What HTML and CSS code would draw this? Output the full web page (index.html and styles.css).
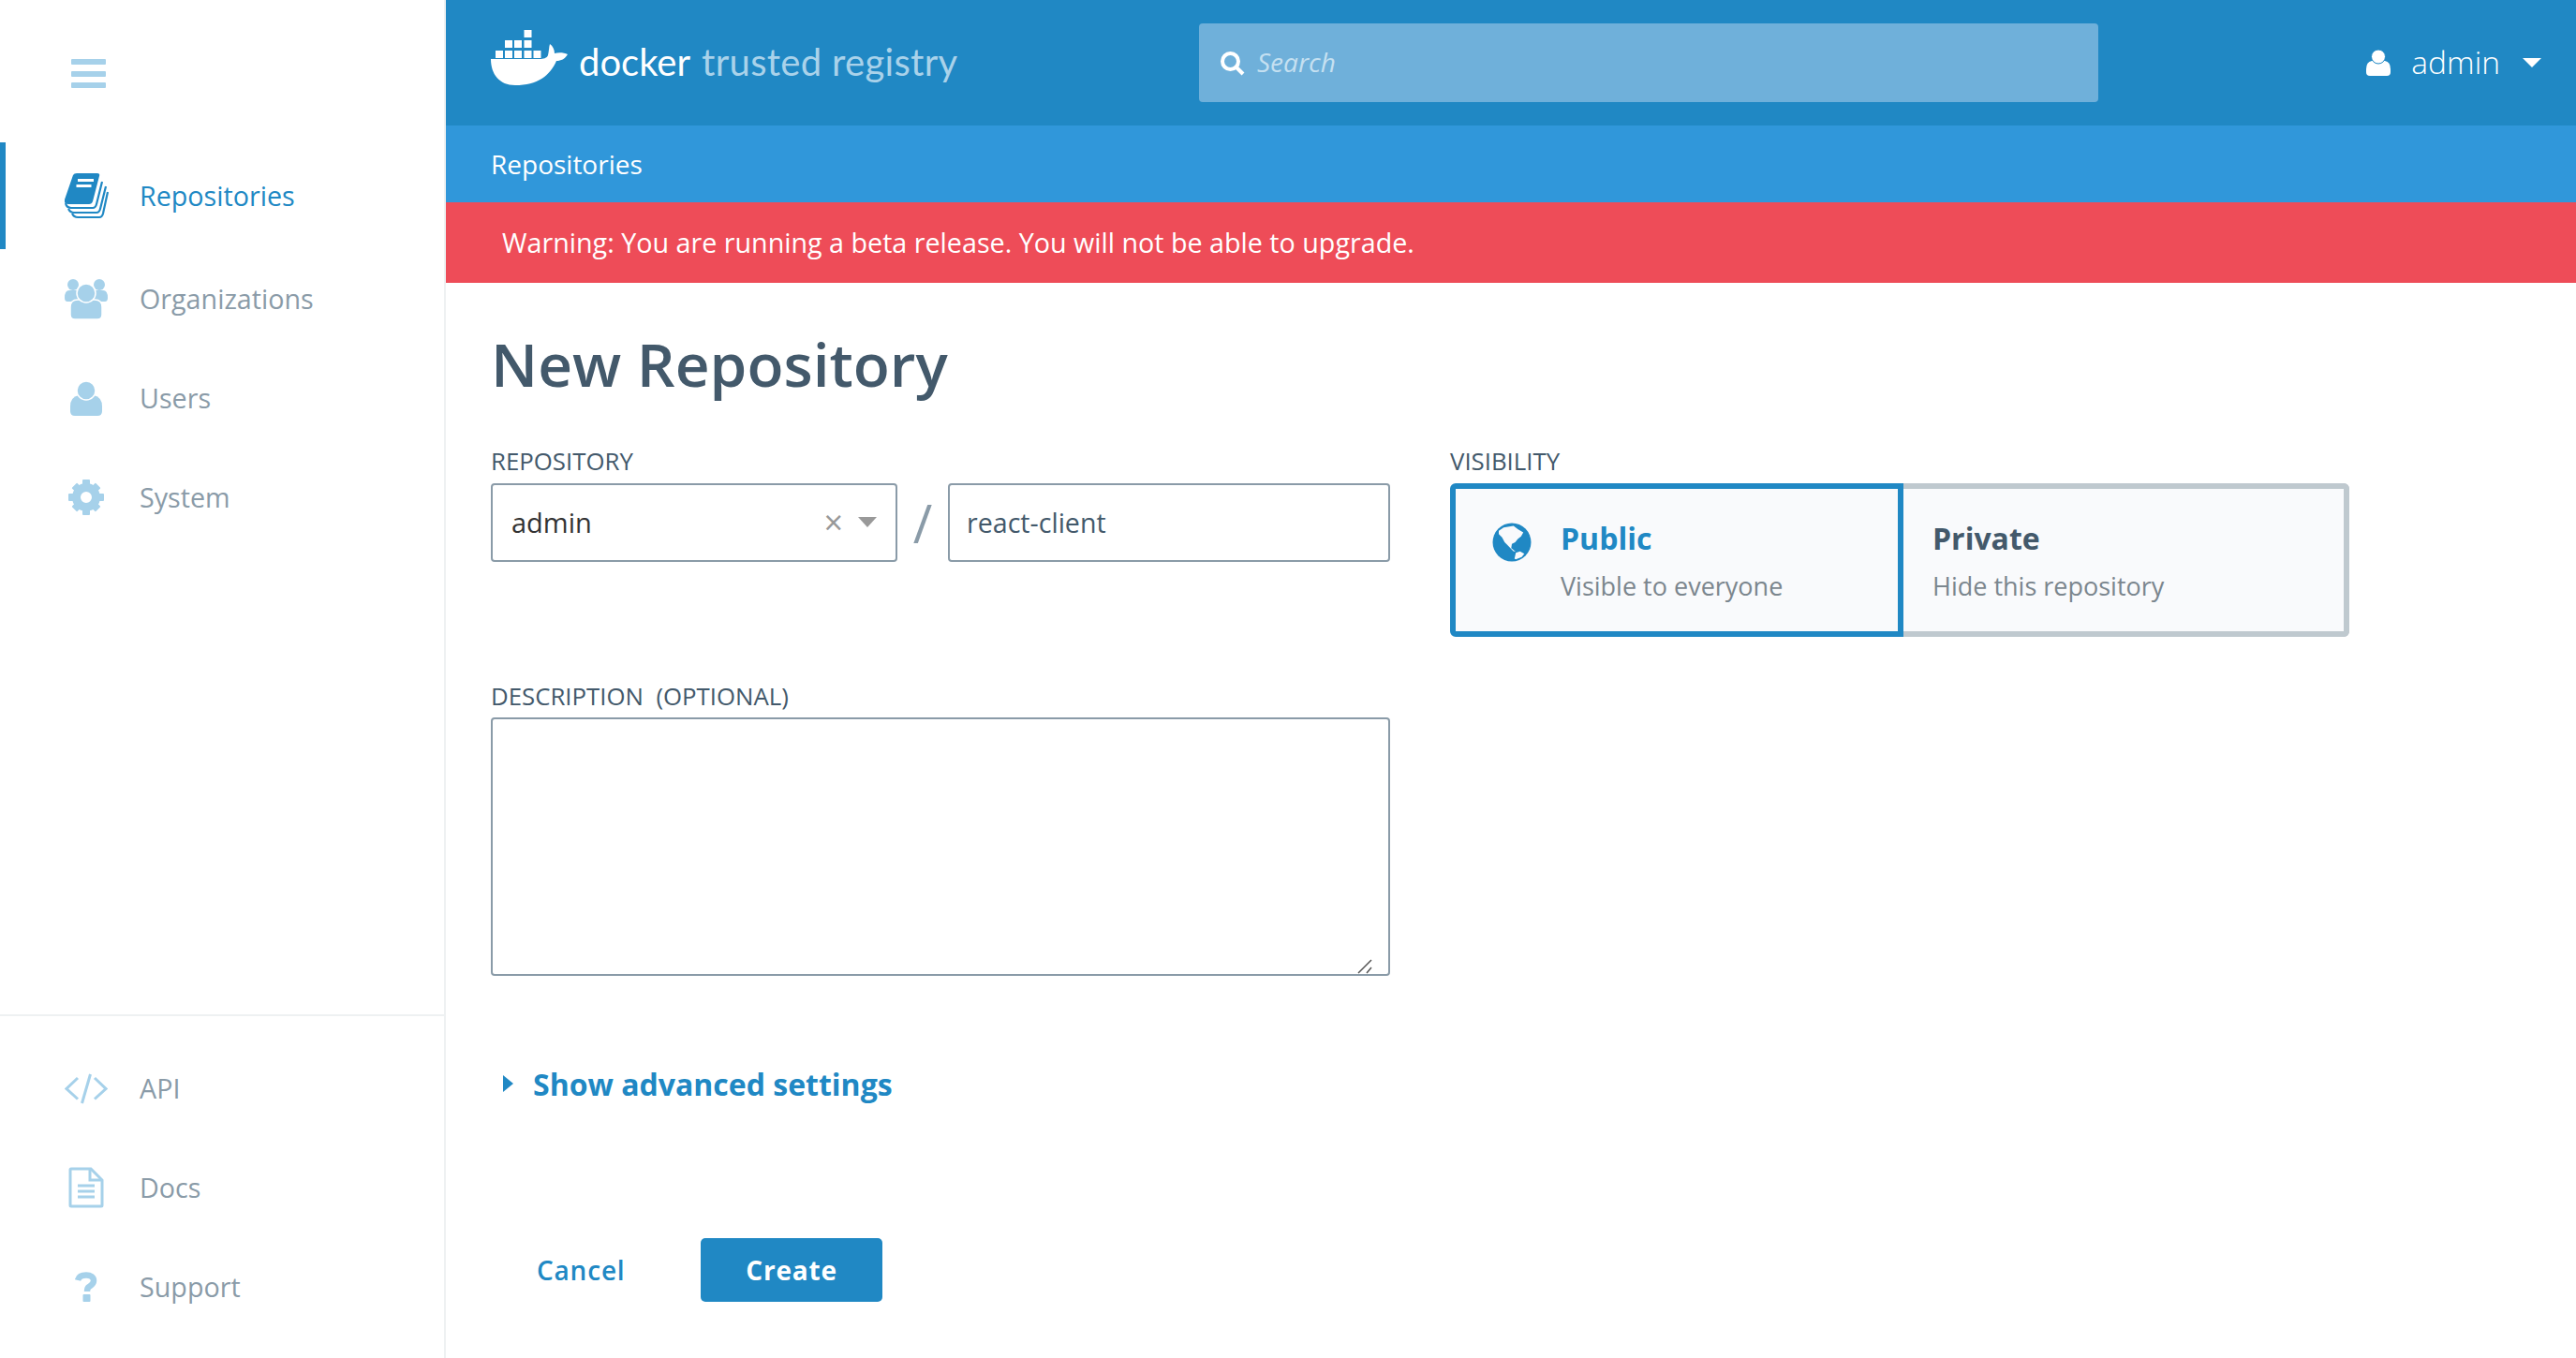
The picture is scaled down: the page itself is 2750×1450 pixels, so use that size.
FILE: index.html
```html
<!DOCTYPE html>
<html>
<head>
    <meta charset="UTF-8">
    <title>New Repository</title>
    <link rel="stylesheet" href="styles.css">
</head>
<body>
    <aside class="sidebar">
        <div class="burger-area">
            <div class="burger"><span></span><span></span><span></span></div>
        </div>
        <nav class="nav-top">
            <a class="nav-item active">
                <span class="nav-icon">
                    <svg width="47" height="49" viewBox="0 0 47 49">
                        <path class="book-cover" d="M9 2Q10 0 13 0H35Q38 0 37 3L30 30Q29 33 26 33H4Q-1 33 0 28Z"/>
                        <rect class="book-label" x="14" y="6" width="17" height="3"/>
                        <rect class="book-label" x="12.500" y="12" width="16" height="3"/>
                        <path class="book-page" d="M1 32Q2 37 7 37H30Q33 37 34 33L40 9"/>
                        <path class="book-page" d="M4 38Q6 42 10 42H34Q37 42 38 38L44 14"/>
                        <path class="book-page" d="M8 43Q10 47 14 47H37Q40 47 41 43L46 20"/>
                    </svg>
                </span>
                Repositories
            </a>
            <a class="nav-item">
                <span class="nav-icon">
                    <svg width="46" height="43" viewBox="0 0 46 43">
                        <circle class="fill-icon" cx="9" cy="6" r="6"/>
                        <circle class="fill-icon" cx="37" cy="6" r="6"/>
                        <path class="fill-icon" d="M0 20Q0 12 5 12H13Q20 12 20 20V24H3Q0 24 0 20Z"/>
                        <path class="fill-icon" d="M46 20Q46 12 41 12H33Q26 12 26 20V24H43Q46 24 46 20Z"/>
                        <path class="fill-icon cut" d="M6 30Q6 22 14 22H32Q40 22 40 30V38Q40 43 35 43H11Q6 43 6 38Z"/>
                        <circle class="fill-icon cut" cx="23" cy="15" r="10"/>
                    </svg>
                </span>
                Organizations
            </a>
            <a class="nav-item">
                <span class="nav-icon">
                    <svg width="34" height="37" viewBox="0 0 34 37">
                        <path class="fill-icon" d="M0 27Q0 17 9 15H25Q34 17 34 27V32Q34 37 29 37H5Q0 37 0 32Z"/>
                        <circle class="fill-icon cut" cx="17" cy="10" r="10"/>
                    </svg>
                </span>
                Users
            </a>
            <a class="nav-item">
                <span class="nav-icon">
                    <svg width="38" height="38" viewBox="0 0 38 38">
                        <circle class="gear-ring" cx="19" cy="19" r="10.500"/>
                        <g class="fill-icon">
                            <rect x="15" y="0" width="8" height="9" rx="1"/>
                            <rect x="15" y="29" width="8" height="9" rx="1"/>
                            <rect x="0" y="15" width="9" height="8" rx="1"/>
                            <rect x="29" y="15" width="9" height="8" rx="1"/>
                            <rect x="15" y="1" width="8" height="9" rx="1" transform="rotate(45 19 19)"/>
                            <rect x="15" y="28" width="8" height="9" rx="1" transform="rotate(45 19 19)"/>
                            <rect x="1" y="15" width="9" height="8" rx="1" transform="rotate(45 19 19)"/>
                            <rect x="28" y="15" width="9" height="8" rx="1" transform="rotate(45 19 19)"/>
                        </g>
                    </svg>
                </span>
                System
            </a>
        </nav>
        <nav class="nav-bottom">
            <a class="nav-item">
                <span class="nav-icon">
                    <svg width="46" height="33" viewBox="0 0 46 33">
                        <path class="line-icon" d="M14 5L2 16.500L14 27.500"/>
                        <path class="line-icon" d="M27.500 1L18.500 32"/>
                        <path class="line-icon" d="M32 5L44 16.500L32 27.500"/>
                    </svg>
                </span>
                API
            </a>
            <a class="nav-item">
                <span class="nav-icon">
                    <svg width="38" height="44" viewBox="0 0 38 44">
                        <path class="line-icon" d="M2 3Q2 2 3 2H24L36 14V41Q36 42 35 42H3Q2 42 2 41Z"/>
                        <path class="line-icon" d="M23 2V14H36"/>
                        <path class="line-icon" d="M10 20H28M10 26H28M10 32H28"/>
                    </svg>
                </span>
                Docs
            </a>
            <a class="nav-item">
                <span class="nav-icon">
                    <svg width="24" height="32" viewBox="0 0 24 32">
                        <path class="help-mark" d="M3 9C4 5 7 3.500 12 3.500C17 3.500 20 6 20 9.500C20 13 17 14.500 15 16C13.500 17 13 18.500 13 21"/>
                        <rect class="fill-icon" x="8.500" y="24" width="8" height="8" rx="1"/>
                    </svg>
                </span>
                Support
            </a>
        </nav>
    </aside>

    <div class="content">
        <header class="topbar">
            <div class="logo">
                <svg class="whale" width="82" height="59" viewBox="0 0 82 59">
                    <rect x="35.500" y="0" width="8" height="8"/>
                    <rect x="15" y="11" width="8" height="8"/>
                    <rect x="25" y="11" width="8" height="8"/>
                    <rect x="35.500" y="11" width="8" height="8"/>
                    <rect x="5" y="22" width="8" height="8"/>
                    <rect x="15" y="22" width="8" height="8"/>
                    <rect x="25" y="22" width="8" height="8"/>
                    <rect x="35.500" y="22" width="8" height="8"/>
                    <rect x="45.500" y="22" width="8" height="8"/>
                    <path d="M0 31H52C56 31 60 30 61 27C62 23 62 18 63 15C66 17 68 21 68 25C72 24 78 24 82 26C79 31 75 33 70 33C63 49 50 59 26 59C9 59 0 47 0 31Z"/>
                </svg>
                <span class="logo-docker">docker</span>
                <span class="logo-product">trusted registry</span>
            </div>
            <div class="search">
                <svg width="28" height="28" viewBox="0 0 28 28">
                    <circle class="search-glass" cx="11.500" cy="11.500" r="8.500"/>
                    <path class="search-glass" d="M18 18L25 25"/>
                </svg>
                <span class="search-text">Search</span>
            </div>
            <div class="user-menu">
                <svg width="26" height="28" viewBox="0 0 26 28">
                    <path class="user-body" d="M0 21Q0 13 6 12H20Q26 13 26 21V24Q26 28 22 28H4Q0 28 0 24Z"/>
                    <circle class="user-head" cx="13" cy="7.500" r="7.500"/>
                </svg>
                <span class="user-name">admin</span>
                <span class="user-caret"></span>
            </div>
        </header>
        <div class="subbar">Repositories</div>
        <div class="warning">Warning: You are running a beta release. You will not be able to upgrade.</div>

        <main class="page">
            <h1>New Repository</h1>
            <div class="form-grid">
                <div class="col-left">
                    <label class="field-label">REPOSITORY</label>
                    <div class="repo-row">
                        <div class="select-box">
                            <span class="select-value">admin</span>
                            <span class="select-clear">×</span>
                            <span class="select-caret"></span>
                        </div>
                        <span class="slash">/</span>
                        <input class="text-input" type="text" value="react-client">
                    </div>
                    <label class="field-label desc-label">DESCRIPTION&nbsp; (OPTIONAL)</label>
                    <div class="desc-wrap">
                        <textarea class="desc-input"></textarea>
                        <svg class="grip" width="16" height="16" viewBox="0 0 16 16">
                            <path d="M1 15L15 1M10 15L15 9"/>
                        </svg>
                    </div>
                </div>
                <div class="col-right">
                    <label class="field-label">VISIBILITY</label>
                    <div class="visibility">
                        <div class="vis-card selected">
                            <svg class="globe" width="42" height="42" viewBox="0 0 42 42">
                                <circle cx="21" cy="21" r="20.500" fill="#2088c4"/>
                                <path fill="#f9fafc" d="M7 8.800L12.200 5.200L22.800 3.500L27.300 7L33.200 10.500L30.800 14.700L27.300 17.500L24.500 21L21 22.800L20.300 27.300L25 31L22.500 30.500L16.800 24.500L13.300 21L10.500 15.800L7 12.200Z"/>
                                <path fill="#f9fafc" d="M23.800 38.500L25.200 32.200L29.700 30.800L34.300 33.200L31.500 36.800L25.200 39.200Z"/>
                            </svg>
                            <div class="vis-title">Public</div>
                            <div class="vis-sub">Visible to everyone</div>
                        </div>
                        <div class="vis-card">
                            <div class="vis-title">Private</div>
                            <div class="vis-sub">Hide this repository</div>
                        </div>
                    </div>
                </div>
            </div>
            <a class="advanced"><span class="advanced-arrow"></span>Show advanced settings</a>
            <div class="actions">
                <a class="btn-cancel">Cancel</a>
                <button class="btn-create" type="button">Create</button>
            </div>
        </main>
    </div>
</body>
</html>
```

FILE: styles.css
```css
* {
    box-sizing: border-box;
}

body {
    margin: 0;
    height: 1450px;
    display: flex;
    overflow: hidden;
    background-color: #ffffff;
    font-family: "Open Sans", Arial, sans-serif;
    color: #43596b;
}

/* sidebar */
.sidebar {
    width: 476px;
    height: 1450px;
    flex-shrink: 0;
    display: flex;
    flex-direction: column;
    border-right: 2px solid #eef1f2;
}

.burger-area {
    height: 152px;
    padding: 63px 0 0 76px;
}

.burger {
    width: 37px;
    height: 31px;
    display: flex;
    flex-direction: column;
    justify-content: space-between;
}

.burger span {
    height: 6px;
    border-radius: 1px;
    background-color: #a6d1ea;
}

.nav-top {
    flex: 1;
}

.nav-item {
    display: flex;
    align-items: center;
    height: 106px;
    padding-bottom: 2px;
    font-size: 28.700px;
    color: #8a9ba8;
}

.nav-item.active {
    height: 114px;
    color: #2088c4;
    border-left: 6px solid #2088c4;
}

.nav-icon {
    width: 50px;
    margin-left: 67px;
    margin-right: 32px;
    margin-top: 2px;
    display: flex;
    justify-content: center;
    flex-shrink: 0;
}

.nav-icon svg {
    flex-shrink: 0;
}

.active .nav-icon {
    margin-left: 61px;
}

.nav-bottom {
    border-top: 2px solid #eef1f2;
    padding: 24px 0 23px;
}

.fill-icon {
    fill: #a6d1ea;
}

.cut {
    stroke: #ffffff;
    stroke-width: 1.500;
}

.gear-ring {
    fill: none;
    stroke: #a6d1ea;
    stroke-width: 9;
}

.line-icon {
    fill: none;
    stroke: #a6d1ea;
    stroke-width: 3;
}

.help-mark {
    fill: none;
    stroke: #a6d1ea;
    stroke-width: 6.500;
}

.book-cover {
    fill: #2088c4;
}

.book-label {
    fill: #ffffff;
}

.book-page {
    fill: none;
    stroke: #2088c4;
    stroke-width: 2.200;
}

/* top bars */
.content {
    flex: 1;
    min-width: 0;
}

.topbar {
    height: 134px;
    padding-left: 48px;
    padding-right: 37px;
    display: flex;
    align-items: center;
    background-color: #2088c4;
    color: #ffffff;
}

.logo {
    width: 756px;
    display: flex;
    align-items: center;
    font-family: Lato, sans-serif;
    font-size: 40px;
    line-height: 1;
    flex-shrink: 0;
}

.whale {
    fill: #ffffff;
    margin-right: 12px;
    margin-bottom: 11px;
    flex-shrink: 0;
}

.logo-docker {
    margin-right: 12px;
    margin-bottom: 3px;
}

.logo-product {
    margin-bottom: 3px;
    letter-spacing: 0.300px;
    color: #a9d2ea;
}

.search {
    width: 960px;
    height: 84px;
    display: flex;
    align-items: center;
    padding-left: 22px;
    background-color: #6fb0da;
    border-radius: 4px;
}

.search svg {
    margin-top: 2px;
}

.search-text {
    margin-left: 12px;
    margin-bottom: 2px;
    font-size: 28px;
    font-style: italic;
    color: #c5e0f1;
}

.search-glass {
    fill: none;
    stroke: #ffffff;
    stroke-width: 4;
}

.user-menu {
    margin-left: auto;
    display: flex;
    align-items: center;
}

.user-body {
    fill: #ffffff;
}

.user-head {
    fill: #ffffff;
    stroke: #2088c4;
    stroke-width: 1;
}

.user-name {
    margin-left: 22px;
    margin-bottom: 2px;
    font-size: 33.500px;
    font-weight: 300;
}

.user-caret {
    margin-left: 24px;
    border-left: 10px solid transparent;
    border-right: 10px solid transparent;
    border-top: 10px solid #ffffff;
}

.subbar {
    height: 82px;
    padding-left: 48px;
    display: flex;
    align-items: center;
    background-color: #3097da;
    color: #ffffff;
    font-size: 28px;
}

.warning {
    height: 86px;
    padding-left: 60px;
    padding-bottom: 2px;
    display: flex;
    align-items: center;
    background-color: #ee4c58;
    color: #ffffff;
    font-size: 28.700px;
}

/* form */
.page {
    padding-left: 48px;
}

h1 {
    margin: 47px 0 47px;
    font-size: 64px;
    line-height: 80px;
    font-weight: 600;
    color: #43596b;
}

.form-grid {
    display: grid;
    grid-template-columns: 960px 960px;
    column-gap: 64px;
}

.field-label {
    display: block;
    font-size: 25.800px;
    line-height: 32px;
    margin-bottom: 8px;
}

.desc-label {
    margin-top: 127px;
    margin-bottom: 7px;
}

.repo-row {
    display: flex;
    align-items: center;
}

.select-box {
    width: 434px;
    height: 84px;
    padding: 0 20px 2px;
    display: flex;
    align-items: center;
    border: 2px solid #8a9ba8;
    border-radius: 4px;
    font-size: 29px;
    color: #333333;
}

.select-value {
    flex: 1;
}

.select-clear {
    font-size: 36px;
    color: #999999;
    margin-right: 16px;
}

.select-caret {
    border-left: 10px solid transparent;
    border-right: 10px solid transparent;
    border-top: 11px solid #999999;
}

.slash {
    width: 54px;
    text-align: center;
    font-size: 56px;
    font-weight: 400;
    color: #8a9ba8;
}

.text-input {
    width: 472px;
    height: 84px;
    padding: 0 18px 2px;
    border: 2px solid #8a9ba8;
    border-radius: 4px;
    font-family: "Open Sans", Arial, sans-serif;
    font-size: 28.600px;
    color: #43596b;
}

.desc-wrap {
    position: relative;
    height: 276px;
}

.desc-input {
    display: block;
    width: 960px;
    height: 276px;
    border: 2px solid #8a9ba8;
    border-radius: 4px;
    resize: none;
}

.grip {
    position: absolute;
    left: 925px;
    top: 258px;
    fill: none;
    stroke: #555555;
    stroke-width: 1.500;
}

.visibility {
    display: flex;
    height: 164px;
}

.vis-card {
    position: relative;
    width: 476px;
    padding: 31px 0 0 31px;
    background-color: #f9fafc;
    border: 6px solid #bfc9cf;
    border-left: none;
    border-radius: 0 6px 6px 0;
}

.vis-card.selected {
    width: 484px;
    padding-left: 112px;
    border: 6px solid #2088c4;
    border-radius: 6px 0 0 6px;
}

.globe {
    position: absolute;
    left: 39px;
    top: 36px;
}

.vis-title {
    font-size: 32px;
    line-height: 44px;
    font-weight: 700;
    color: #43596b;
}

.selected .vis-title {
    color: #2088c4;
}

.vis-sub {
    margin-top: 10px;
    font-size: 27px;
    line-height: 38px;
    color: #7b868e;
}

.advanced {
    display: flex;
    align-items: center;
    margin-top: 93px;
    height: 44px;
    padding-left: 13px;
    font-size: 32px;
    font-weight: 700;
    color: #2088c4;
}

.advanced-arrow {
    margin-right: 21px;
    border-top: 9px solid transparent;
    border-bottom: 9px solid transparent;
    border-left: 11px solid #2088c4;
}

.actions {
    display: flex;
    align-items: center;
    margin-top: 143px;
    padding-left: 49px;
}

.btn-cancel {
    width: 175px;
    font-size: 28px;
    font-weight: 600;
    letter-spacing: 0.800px;
    color: #2088c4;
}

.btn-create {
    width: 194px;
    height: 68px;
    border: none;
    border-radius: 5px;
    background-color: #2088c4;
    color: #ffffff;
    font-family: "Open Sans", Arial, sans-serif;
    font-size: 28px;
    font-weight: 700;
    letter-spacing: 0.800px;
}
```
